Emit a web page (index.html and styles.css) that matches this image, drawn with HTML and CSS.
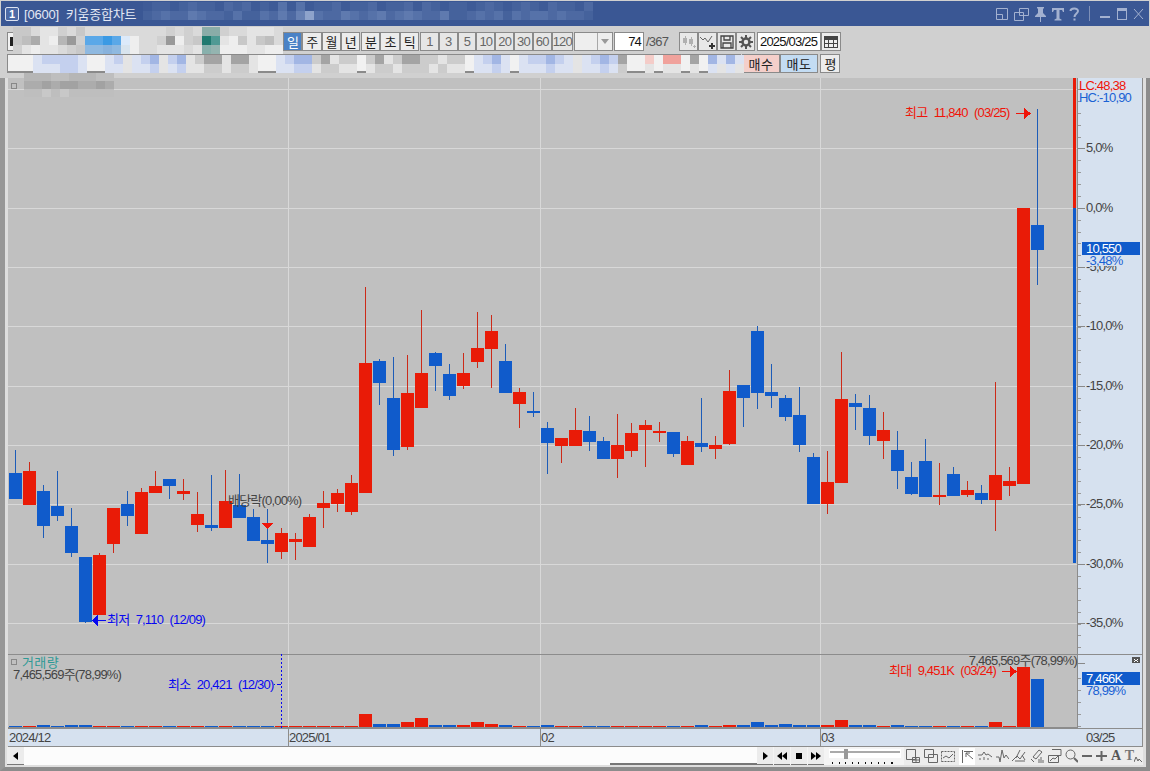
FILE: index.html
```html
<!DOCTYPE html>
<html lang="ko">
<head>
<meta charset="UTF-8" />
<meta name="viewport" content="width=device-width, initial-scale=1" />
<title>키움종합차트</title>
<link rel="stylesheet" href="styles.css">
</head>
<body>

<div id="window">

  <header class="titlebar">
    <span class="logo">1</span>
    <span class="title-text">[0600]&nbsp; 키움종합차트</span>
    <div class="title-icons">
      <svg width="14" height="14" viewBox="0 0 14 14"><path d="M1.500 1.500h11v11h-11zM1.500 7.500h6v5" /></svg>
      <svg width="15" height="14" viewBox="0 0 15 14"><path d="M5.500 1.500h9v7h-9zM.5 5.500h9v8h-9z" /></svg>
      <svg width="13" height="16" viewBox="0 0 13 16"><path class="solid" d="M3 1h7v1l-1 1v4l3 3v1H1v-1l3-3V3L3 2zM6 11h1v5H6z" /></svg>
      <svg width="12" height="14" viewBox="0 0 12 14"><path class="solid" d="M0 1h12v4h-1L10 3H7.500v8.500l2 1V13.500H2.500V12.500l2-1V3H2L1 5H0z" /></svg>
      <svg width="11" height="14" viewBox="0 0 11 14"><path class="thick" d="M1.500 4C1.500 1 9 .5 9 4c0 2.500-3.500 2.500-3.500 6M5.500 11.500v2" /></svg>
      <span class="title-sep"></span>
      <svg width="12" height="14" viewBox="0 0 12 14"><path class="solid" d="M1 9h10v2H1z" /></svg>
      <svg width="12" height="14" viewBox="0 0 12 14"><path class="solid" d="M1 1h10v12H1zM2 4v8h8V4z" /></svg>
      <svg width="11" height="14" viewBox="0 0 11 14"><path d="M1 2l9 10M10 2L1 12" /></svg>
    </div>
    <svg class="mosaic mosaic-title" id="mosaic-title"></svg>
  </header>

  <div class="toolbar">
    <div class="row">
      <div class="combo-main"><span class="combo-mark"></span></div>

      <div class="group group-period">
        <button class="btn active">일</button>
        <button class="btn">주</button>
        <button class="btn">월</button>
        <button class="btn">년</button>
      </div>
      <div class="group group-time">
        <button class="btn">분</button>
        <button class="btn">초</button>
        <button class="btn">틱</button>
      </div>
      <div class="group group-num">
        <button class="btn muted">1</button>
        <button class="btn muted">3</button>
        <button class="btn muted">5</button>
        <button class="btn muted">10</button>
        <button class="btn muted">20</button>
        <button class="btn muted">30</button>
        <button class="btn muted">60</button>
        <button class="btn muted">120</button>
      </div>

      <div class="combo-small">
        <span class="combo-arrow"></span>
      </div>
      <div class="count-input">74</div>
      <div class="count-total">/367</div>

      <div class="group group-tools">
        <button class="btn icon-btn">
          <svg width="14" height="14" viewBox="0 0 14 14"><path fill="#b0b0b0" d="M1 3h2V1h1v2h1v5H4v2H3V8H1zM7 4h2V2h1v2h1v5h-1v2H9V9H7zM11 11h1v-1h1v1h1v1h-1v1h-1v-1h-1z" /></svg>
        </button>
        <button class="btn icon-btn">
          <svg width="15" height="14" viewBox="0 0 15 14"><path fill="none" stroke="#666" d="M0 2l3 3 2-2 3 4 4-6" /><path fill="#333" d="M9 10h2V8h2v2h2v2h-2v2h-2v-2H9z" /></svg>
        </button>
        <button class="btn icon-btn">
          <svg width="14" height="14" viewBox="0 0 14 14"><path fill="none" stroke="#444" stroke-width="1.300" d="M1 1h12v12H1zM4 1v4h6V1M3 13V8h8v5" /></svg>
        </button>
        <button class="btn icon-btn">
          <svg width="14" height="14" viewBox="0 0 14 14"><circle cx="7" cy="7" r="3.500" fill="none" stroke="#555" stroke-width="2.500" /><path stroke="#555" stroke-width="2" d="M7 0v3M7 11v3M0 7h3M11 7h3M2 2l2 2M10 10l2 2M12 2l-2 2M4 10l-2 2" /></svg>
        </button>
      </div>

      <div class="date-input">2025/03/25</div>
      <button class="btn cal-btn">
        <svg width="14" height="12" viewBox="0 0 14 12"><path fill="#444" d="M0 0h14v12H0z" /><path fill="#eee" d="M1 4h3v3H1zM5 4h4v3H5zM10 4h3v3h-3zM1 8h3v3H1zM5 8h4v3H5zM10 8h3v3h-3z" /></svg>
      </button>
    </div>

    <div class="row row-order">
      <div class="order-input"></div>
      <button class="btn order-buy">매수</button>
      <button class="btn order-sell">매도</button>
      <button class="btn order-flat">평</button>
    </div>
    <svg class="mosaic mosaic-code" id="mosaic-code"></svg>
    <svg class="mosaic mosaic-info" id="mosaic-info"></svg>
    <svg class="mosaic mosaic-name" id="mosaic-name"></svg>
  </div>

  <div class="frame">
    <svg id="chart" width="1135" height="669" viewBox="8 78 1135 669"></svg>

    <div class="scrollbar">
      <button class="scroll-btn">
        <svg width="8" height="10" viewBox="0 0 8 10"><path d="M6 1v8L1 5z" /></svg>
      </button>
      <div class="scroll-track"><span class="scroll-thumb"></span></div>
      <button class="scroll-btn play-btn">
        <svg width="8" height="10" viewBox="0 0 8 10"><path d="M2 1v8l5-4z" /></svg>
      </button>
      <button class="scroll-btn play-btn">
        <svg width="10" height="10" viewBox="0 0 10 10"><path d="M5 1v8L0 5zM10 1v8L5 5z" /></svg>
      </button>
      <button class="scroll-btn play-btn">
        <svg width="8" height="10" viewBox="0 0 8 10"><path d="M1 2h6v6H1z" /></svg>
      </button>
      <button class="scroll-btn play-btn">
        <svg width="10" height="10" viewBox="0 0 10 10"><path d="M0 1v8l5-4zM5 1v8l5-4z" /></svg>
      </button>

      <svg class="slider" width="72" height="18" viewBox="0 0 72 18">
        <path fill="#fff" d="M0 2h72v9H0z" />
        <path fill="#aaa" d="M1 4h70v2H1z" />
        <path fill="#999" d="M15 2h4v10h-4z" />
        <path fill="#111" d="M3 15h1v2H3zM10 15h1v2h-1zM16 15h1v2h-1zM23 15h1v2h-1zM29 15h1v2h-1zM36 15h1v2h-1zM42 15h1v2h-1zM49 15h1v2h-1zM55 15h1v2h-1zM62 15h2v2h-2z" />
      </svg>

      <div class="tool-icons">
        <svg width="14" height="14" viewBox="0 0 14 14"><path d="M.5 .5h9v10h-9zM6.500 8.500h7v5h-7zM10 8.500v5M6.500 11h7" /></svg>
        <svg width="14" height="14" viewBox="0 0 14 14"><path d="M.5 .5h9v8h-9zM4.500 5.500h9v8h-9z" /></svg>
        <svg width="14" height="14" viewBox="0 0 14 14"><path stroke-dasharray="2 1" d="M.5 2.500h13M.5 12.500h13M.5 2.500v10M13.500 2.500v10" /><path d="M2 9l3-2 3 2 4-4" /></svg>
        <span class="tool-pressed"><svg width="12" height="14" viewBox="0 0 12 14"><path d="M1.500 1v13M3 2.500h9M5 4l7 6M5 4v4M5 4h4" /></svg></span>
        <svg width="14" height="14" viewBox="0 0 14 14"><path d="M0 6h4l2-3 2 3 2-1 4 3M2 9v2M6 8v3M10 9v2" /></svg>
        <svg width="13" height="14" viewBox="0 0 13 14"><path d="M0 8h3l1 5 2-12 2 8 2-3 3 4" /></svg>
        <svg width="14" height="14" viewBox="0 0 14 14"><path d="M0 12l5-5 3 3 5-7M8 1l-4 8M10 6l3 5M3 12h10" /></svg>
        <svg width="14" height="14" viewBox="0 0 14 14"><path d="M3 8l6-7 3 2-6 7zM1 10l3 3M9 10v4M11 8v6M13 11v3" /></svg>
        <svg width="14" height="14" viewBox="0 0 14 14"><path d="M4 .5h9v6h-9M.5 6.500h10v7H.5zM2 12l3-3 2 1 3-3" /></svg>
        <svg width="13" height="14" viewBox="0 0 13 14"><circle cx="5.500" cy="5.500" r="4.500" /><path stroke-width="2" d="M9 9l4 4" /></svg>
        <svg width="11" height="14" viewBox="0 0 11 14"><path stroke-width="2" d="M0 7h10" /></svg>
        <svg width="11" height="14" viewBox="0 0 11 14"><path stroke-width="2" d="M0 7h11M5.500 2v10" /></svg>
        <span class="tool-letter">A</span>
        <span class="tool-letter tool-letter-t">T<svg width="8" height="8" viewBox="0 0 8 8"><path d="M0 7l2-5 2 4 1-2 3 3" /></svg></span>
      </div>
    </div>
  </div>
</div>

<script src="script.js"></script>
</body>
</html>
```

FILE: styles.css
```css
html, body {
  margin: 0;
  padding: 0;
}
body {
  font-family: "Liberation Sans", "Noto Sans CJK KR", sans-serif;
  font-size: 13px;
  letter-spacing: -0.8px;
  color: #333;
  background: #8c8c8c;
}
#window {
  position: relative;
  width: 1150px;
  height: 771px;
  overflow: hidden;
  display: flex;
  flex-direction: column;
  background: #d0d0d0;
}

/* title bar */
.titlebar {
  position: relative;
  flex: 0 0 25px;
  margin: 1px 1px 0 1px;
  display: flex;
  align-items: center;
  background: #3a5794;
  color: #e4e9f4;
  font-size: 13px;
  letter-spacing: -0.2px;
}
.logo {
  box-sizing: border-box;
  width: 14px;
  height: 14px;
  margin-left: 4px;
  border: 1px solid #dde3f0;
  border-radius: 2px;
  text-align: center;
  font-weight: 700;
  font-size: 11px;
  line-height: 12px;
  background: #4c6aa6;
  color: #fff;
}
.title-text {
  margin-left: 5px;
}
.title-icons {
  margin-left: auto;
  margin-right: 5px;
  display: flex;
  align-items: center;
  gap: 5px;
}
.title-icons svg {
  fill: none;
  stroke: #a3b1d0;
}
.title-icons .solid {
  fill: #a3b1d0;
  stroke: none;
}
.title-icons .thick {
  stroke-width: 2;
}
.title-sep {
  width: 1px;
  height: 15px;
  margin: 0 4px;
  background: #7e90b8;
}

/* toolbars */
.toolbar {
  position: relative;
  flex: 0 0 52px;
  box-sizing: border-box;
  padding: 6px 0 0 7px;
}
.row {
  display: flex;
  height: 19px;
}
.row-order {
  margin-top: 3px;
}
.btn {
  box-sizing: border-box;
  flex: 1;
  margin: 0;
  padding: 0;
  border: 1px solid #8a8a8a;
  background: #ececec;
  color: #222;
  font-family: inherit;
  font-size: 13px;
  letter-spacing: inherit;
  display: flex;
  align-items: center;
  justify-content: center;
}
.btn.active {
  background: #4a82c6;
  color: #fff;
}
.btn.muted {
  color: #666;
  background: #e6e6e6;
}
.group {
  display: flex;
}
.combo-main {
  box-sizing: border-box;
  width: 273px;
  margin-right: 3px;
  border: 1px solid #8a8a8a;
  background: #f2f2f2;
  display: flex;
  align-items: center;
}
.combo-mark {
  width: 3px;
  height: 9px;
  margin-left: 2px;
  background: #222;
}
.group-period {
  width: 77px;
}
.group-time {
  width: 58px;
  margin-left: 1px;
}
.group-num {
  width: 153px;
  margin-left: 1px;
}
.combo-small {
  box-sizing: border-box;
  width: 39px;
  margin-left: 1px;
  border: 1px solid #8a8a8a;
  background: #eeeeee;
  display: flex;
  justify-content: flex-end;
}
.combo-arrow {
  box-sizing: border-box;
  width: 15px;
  border-left: 1px solid #a8a8a8;
  position: relative;
}
.combo-arrow::after {
  content: "";
  position: absolute;
  left: 3px;
  top: 6px;
  border: 4px solid transparent;
  border-top: 5px solid #999;
  border-bottom: 0;
}
.count-input {
  box-sizing: border-box;
  width: 30px;
  margin-left: 1px;
  padding-right: 2px;
  border: 1px solid #8a8a8a;
  background: #fff;
  color: #111;
  text-align: right;
  line-height: 17px;
}
.count-total {
  width: 35px;
  padding-left: 2px;
  box-sizing: border-box;
  color: #555;
  line-height: 19px;
}
.group-tools {
  width: 76px;
}
.icon-btn {
  background: #e8e8e8;
}
.date-input {
  box-sizing: border-box;
  width: 64px;
  margin-left: 2px;
  padding-left: 2px;
  border: 1px solid #8a8a8a;
  background: #fff;
  color: #111;
  line-height: 17px;
  white-space: nowrap;
}
.cal-btn {
  flex: 0 0 20px;
  height: 19px;
}
.order-input {
  box-sizing: border-box;
  width: 734px;
  margin-right: 1px;
  border: 2px solid #8a8a8a;
  border-width: 1px 2px 2px 1px;
  background: #f1f1f1;
}
.btn.order-buy {
  flex: 0 0 38px;
  background: #f4cfca;
  letter-spacing: 0.5px;
}
.btn.order-sell {
  flex: 0 0 38px;
  background: #c3dcf3;
  letter-spacing: 0.5px;
}
.btn.order-flat {
  flex: 0 0 20px;
  margin-left: 2px;
}

/* blurred regions laid over the toolbars */
.mosaic {
  position: absolute;
  pointer-events: none;
  shape-rendering: crispEdges;
}
.mosaic-title {
  left: 142px;
  top: 1px;
}
.mosaic-code {
  left: 13px;
  top: 1px;
}
.mosaic-info {
  left: 33px;
  top: 29px;
}
.mosaic-name {
  left: 24px;
  top: 47px;
  z-index: 2;
}

/* chart frame */
.frame {
  flex: 1;
  box-sizing: border-box;
  border-left: 5px solid #979797;
  border-right: 4px solid #8c8c8c;
  border-bottom: 4px solid #8c8c8c;
  padding: 0 3px 0 2px;
  background: #dedede;
  display: flex;
  flex-direction: column;
}
#chart {
  display: block;
  margin-left: 1px;
  shape-rendering: crispEdges;
}
#chart text {
  font-size: 13px;
  letter-spacing: -0.8px;
  word-spacing: 3.5px;
  shape-rendering: auto;
}
#chart .lbl-dark { fill: #444; }
#chart .lbl-red { fill: #f01408; }
#chart .lbl-blue { fill: #0808f0; }
#chart .lbl-axis-blue { fill: #1a62d4; }
#chart .lbl-teal { fill: #2e9a96; letter-spacing: 0.4px; }
#chart .lbl-white { fill: #fff; }

/* bottom scroll and tool strip */
.scrollbar {
  display: flex;
  height: 18px;
  align-items: stretch;
  background: #f4f4f4;
}
.scroll-btn {
  box-sizing: border-box;
  flex: 0 0 17px;
  margin: 0;
  padding: 0;
  border: 0;
  border-bottom: 1px solid #777;
  background: #ececec;
  display: flex;
  align-items: center;
  justify-content: center;
}
.play-btn {
  flex-basis: 16px;
  margin-right: 1px;
}
.scroll-track {
  position: relative;
  width: 733px;
  background: #fcfcfc;
}
.scroll-thumb {
  position: absolute;
  left: 586px;
  right: 0;
  bottom: 0;
  height: 2px;
  background: #777;
}
.slider {
  margin-left: 4px;
  flex: 0 0 72px;
}
.tool-icons {
  margin-left: 3px;
  flex: 1;
  display: flex;
  align-items: center;
  justify-content: space-between;
  background: #ececec;
  padding: 0 1px 0 2px;
}
.tool-icons svg {
  fill: none;
  stroke: #666;
  flex: 0 0 auto;
}
.tool-pressed {
  display: flex;
  align-items: center;
  justify-content: center;
  width: 16px;
  height: 17px;
  background: #fff;
}
.tool-letter {
  font-family: "Liberation Serif", serif;
  font-weight: 700;
  font-size: 14px;
  line-height: 14px;
  letter-spacing: 0;
  color: #555;
}
.tool-letter-t {
  display: flex;
  align-items: flex-end;
  color: #777;
}
```

FILE: script.js
```js
const svgNS = 'http://www.w3.org/2000/svg';
const chart = document.getElementById('chart');

const RED = '#e91b07';
const BLUE = '#105bcb';
const RED_WICK = '#cc2a18';
const BLUE_WICK = '#1d5cb8';
const GRID = '#d8d8d8';
const AXIS_BG = '#d6e1ef';
const LINE = '#8c8c8c';

// colour, wick top, body top, body bottom, wick low
const CANDLES = [
  ['b',450,473,499,499],['r',462,471,505,505],['b',485,491,526,538],['b',471,506,516,521],
  ['b',508,526,553,557],['b',557,557,622,623],['r',553,555,615,615],['r',508,508,544,553],
  ['b',491,504,516,526],['r',488,492,534,534],['r',471,486,493,493],['b',479,479,486,499],
  ['r',479,491,494,500],['r',492,514,525,532],['b',475,525,528,531],['r',470,501,528,528],
  ['b',474,505,518,518],['b',509,517,541,541],['b',509,540,544,563],['r',528,533,552,559],
  ['r',533,539,542,560],['r',514,517,547,547],['r',491,503,508,528],['r',489,493,504,512],
  ['r',475,483,512,515],['r',287,363,493,493],['b',359,361,383,405],['b',357,398,450,456],
  ['r',355,393,447,450],['r',310,373,408,408],['b',352,353,366,391],['b',364,374,396,400],
  ['r',353,373,386,389],['r',312,348,362,368],['r',315,331,349,388],['b',344,361,393,393],
  ['r',388,392,404,428],['b',392,411,413,417],['b',422,428,443,474],['r',438,438,446,463],
  ['r',408,430,446,446],['b',416,431,442,451],['b',437,441,459,459],['r',414,445,459,478],
  ['r',423,433,451,457],['r',420,425,430,467],['r',422,431,433,442],['b',432,432,454,457],
  ['r',436,441,465,465],['b',398,443,447,452],['r',436,445,449,459],['r',370,391,444,445],
  ['b',385,385,398,427],['b',326,331,393,409],['b',364,392,396,408],['b',395,398,417,421],
  ['b',387,415,445,452],['b',453,457,504,504],['r',451,482,504,514],['r',352,399,483,483],
  ['b',394,403,407,430],['b',395,408,436,445],['r',412,430,441,459],['b',431,450,471,489],
  ['b',462,477,494,495],['b',439,461,497,497],['r',463,495,497,505],['b',467,474,496,496],
  ['r',481,490,495,497],['b',485,493,500,504],['r',382,475,500,531],['r',467,481,486,496],
  ['r',208,208,484,484],['b',109,225,250,285]
];

// volume bars taller than the 1px default: candle index -> height
const VOLUME = {
  2:2, 4:2, 5:2, 25:13, 26:3, 27:3, 28:5, 29:9, 30:2, 31:2, 32:2, 33:5, 34:3, 35:2,
  38:2, 49:2, 51:2, 52:2, 53:5, 54:2, 55:3, 56:2, 57:2, 58:2, 59:7, 60:2, 61:2, 63:2,
  70:5, 72:60, 73:48
};

function rect(x, y, w, h, fill) {
  const r = document.createElementNS(svgNS, 'rect');
  r.setAttribute('x', x);
  r.setAttribute('y', y);
  r.setAttribute('width', w);
  r.setAttribute('height', h);
  r.setAttribute('fill', fill);
  chart.appendChild(r);
}

function poly(points, fill) {
  const p = document.createElementNS(svgNS, 'polygon');
  p.setAttribute('points', points);
  p.setAttribute('fill', fill);
  chart.appendChild(p);
}

function label(x, y, str, cls, anchor) {
  const t = document.createElementNS(svgNS, 'text');
  t.setAttribute('x', x);
  t.setAttribute('y', y);
  t.setAttribute('class', cls);
  if (anchor) t.setAttribute('text-anchor', anchor);
  t.textContent = str;
  chart.appendChild(t);
}

function drawBackground() {
  rect(8, 78, 1135, 669, LINE);
  rect(8, 78, 1069, 576, '#c0c0c0');
  rect(8, 655, 1069, 72, '#c0c0c0');
  rect(8, 729, 1134, 17, AXIS_BG);
  rect(1078, 78, 64, 650, AXIS_BG);
  rect(1077, 654, 65, 1, LINE);

  [89, 148, 208, 267, 326, 386, 445, 504, 564, 623].forEach(y => rect(8, y, 1069, 1, GRID));
  [288, 540, 820].forEach(x => {
    rect(x, 78, 1, 576, GRID);
    rect(x, 655, 1, 72, GRID);
    rect(x, 729, 1, 17, LINE);
  });
}

function drawCandles() {
  CANDLES.forEach((c, i) => {
    const x = 9 + 14 * i;
    const up = c[0] === 'r';
    rect(x + 6, c[1], 1, c[4] - c[1], up ? RED_WICK : BLUE_WICK);
    rect(x, c[2], 13, c[3] - c[2], up ? RED : BLUE);
    const h = VOLUME[i] || 1;
    rect(x, 727 - h, 13, h, up ? RED : BLUE);
  });
}

function drawAxis() {
  // range bar next to the price axis
  rect(1073, 78, 3, 130, RED);
  rect(1073, 208, 3, 355, BLUE);

  for (let y = 89; y < 650; y += 11.88) {
    rect(1078, Math.round(y), 3, 1, '#999');
  }
  [148, 208, 267, 326, 386, 445, 504, 564, 623].forEach(y => rect(1078, y, 7, 1, '#888'));

  const marks = [
    [152, '5,0%'], [212, '0,0%'], [271, '-5,0%'], [330, '-10,0%'], [390, '-15,0%'],
    [449, '-20,0%'], [508, '-25,0%'], [568, '-30,0%'], [627, '-35,0%']
  ];
  marks.forEach(m => label(1086, m[0], m[1], 'lbl-dark'));

  label(1079, 90, 'LC:48,38', 'lbl-red');
  label(1079, 102, 'HC:-10,90', 'lbl-axis-blue');

  rect(1082, 242, 58, 13, BLUE);
  label(1086, 253, '10,550', 'lbl-white');
  rect(1082, 255, 58, 11, AXIS_BG);
  label(1086, 265, '-3,48%', 'lbl-axis-blue');

  // volume axis
  [678, 690, 702, 714, 726].forEach(y => rect(1078, y, 3, 1, '#999'));
  rect(1078, 663, 7, 1, '#888');
  rect(1082, 672, 58, 13, BLUE);
  label(1086, 683, '7,466K', 'lbl-white');
  label(1086, 695, '78,99%', 'lbl-axis-blue');
  rect(1132, 657, 8, 6, '#555');
  rect(1134, 659, 1, 1, '#fff');
  rect(1137, 659, 1, 1, '#fff');
  rect(1135, 660, 2, 1, '#fff');
  rect(1134, 661, 1, 1, '#fff');
  rect(1137, 661, 1, 1, '#fff');

  // date axis
  label(9, 742, '2024/12', 'lbl-dark');
  label(289, 742, '2025/01', 'lbl-dark');
  label(541, 742, '02', 'lbl-dark');
  label(821, 742, '03', 'lbl-dark');
  label(1086, 742, '03/25', 'lbl-dark');
}

function drawNotes() {
  rect(11, 83, 6, 1, '#888');
  rect(11, 88, 6, 1, '#888');
  rect(11, 83, 1, 6, '#888');
  rect(16, 83, 1, 6, '#888');

  label(905, 117, '최고 11,840 (03/25)', 'lbl-red');
  rect(1016, 113, 9, 1, '#f01408');
  poly('1024,108 1031,113.500 1024,119', '#f01408');

  label(107, 624, '최저 7,110 (12/09)', 'lbl-blue');
  rect(98, 620, 8, 1, '#0808f0');
  poly('98,615 92,620.500 98,626', '#0808f0');

  label(228, 505, '배당락(0,00%)', 'lbl-dark');
  poly('262,523 273,523 267.500,529', '#f01408');

  // volume panel
  rect(11, 659, 6, 1, '#888');
  rect(11, 664, 6, 1, '#888');
  rect(11, 659, 1, 6, '#888');
  rect(16, 659, 1, 6, '#888');
  label(22, 667, '거래량', 'lbl-teal');
  label(13, 679, '7,465,569주(78,99%)', 'lbl-dark');
  label(168, 689, '최소 20,421 (12/30)', 'lbl-blue');
  for (let y = 654; y < 727; y += 4) rect(281, y, 1, 2, '#0808f0');
  rect(274, 684, 1, 1, '#0808f0');
  rect(277, 684, 4, 1, '#0808f0');
  label(1077, 665, '7,465,569주(78,99%)', 'lbl-dark', 'end');
  label(889, 675, '최대 9,451K (03/24)', 'lbl-red');
  rect(1002, 671, 9, 1, '#f01408');
  poly('1010,666 1017,671.500 1010,677', '#f01408');
}

// blurred text in the reference: rows of characters looked up in a palette
function drawMosaic(id, palette, rows, cellW, cellH) {
  const el = document.getElementById(id);
  const clean = rows.map(r => r.replace(/ /g, ''));
  el.setAttribute('width', clean[0].length * cellW);
  el.setAttribute('height', clean.length * cellH);
  clean.forEach((row, ry) => {
    [...row].forEach((ch, rx) => {
      const fill = palette[ch];
      if (!fill) return;
      const r = document.createElementNS(svgNS, 'rect');
      r.setAttribute('x', rx * cellW);
      r.setAttribute('y', ry * cellH);
      r.setAttribute('width', cellW);
      r.setAttribute('height', cellH);
      r.setAttribute('fill', fill);
      el.appendChild(r);
    });
  });
}

const GRAYS = {
  0:'#999999', 1:'#a2a2a2', 2:'#acacac', 3:'#b6b6b6', 4:'#bebebe',
  5:'#c8c8c8', 6:'#d0d0d0', 7:'#dadada', 8:'#e4e4e4', 9:'#eeeeee'
};

drawBackground();
drawCandles();
drawAxis();
drawNotes();

drawMosaic('mosaic-title', {
  0:'#3e5b97', 1:'#45629c', 2:'#4d69a2', 3:'#5672a9', 4:'#5f7aaf',
  5:'#6781b4', 6:'#6f88b9', 7:'#7990bf', 9:'#8ea3cb'
}, [
  '01101211021201030301120112011202101101210121021102',
  '12322432213113242593224323423432241123231323323221'
], 9, 9);

drawMosaic('mosaic-code', Object.assign({
  B:'#5aa8e8', C:'#3b9ae4', l:'#dceafa', m:'#8fb9e0', n:'#88b2dc', o:'#d8e4ee',
  t:'#8aaca8', T:'#1f7a70', U:'#4f9a94', v:'#88b0ac', w:'#94b4b0'
}, GRAYS), [
  '55788675 77777 7 7776767 tt 6778887',
  '54289306 BBCBl 9 7760965 TU 8958547',
  '68988765 mmnmo 9 7788878 vw 9998899'
], 9, 9);

drawMosaic('mosaic-info', {
  l:'#dbe2f2', b:'#c4d0ee', B:'#a2b6e4', g:'#cccccc', G:'#a4a4a4', h:'#e4e4e4',
  p:'#f4ccc8', P:'#f0a29c'
}, [
  'lbbbbl .. lbhlbBhbB hgGGhGGh .. lbBB gGhgg . gGhgGGgghgg . lbBl . lbbBbl hlbBb G .. p . PP . G . B l B l',
  'lllbbl .. llhllbhlb hhgghggh .. llbb hgghh . hgghggghghh . llbl . lllbll hllbl g .. h . hh . h . l h l h'
], 9, 9);

drawMosaic('mosaic-name', GRAYS, [
  '3334433344',
  '2212112212',
  '4454544444'
], 9, 8);
```
